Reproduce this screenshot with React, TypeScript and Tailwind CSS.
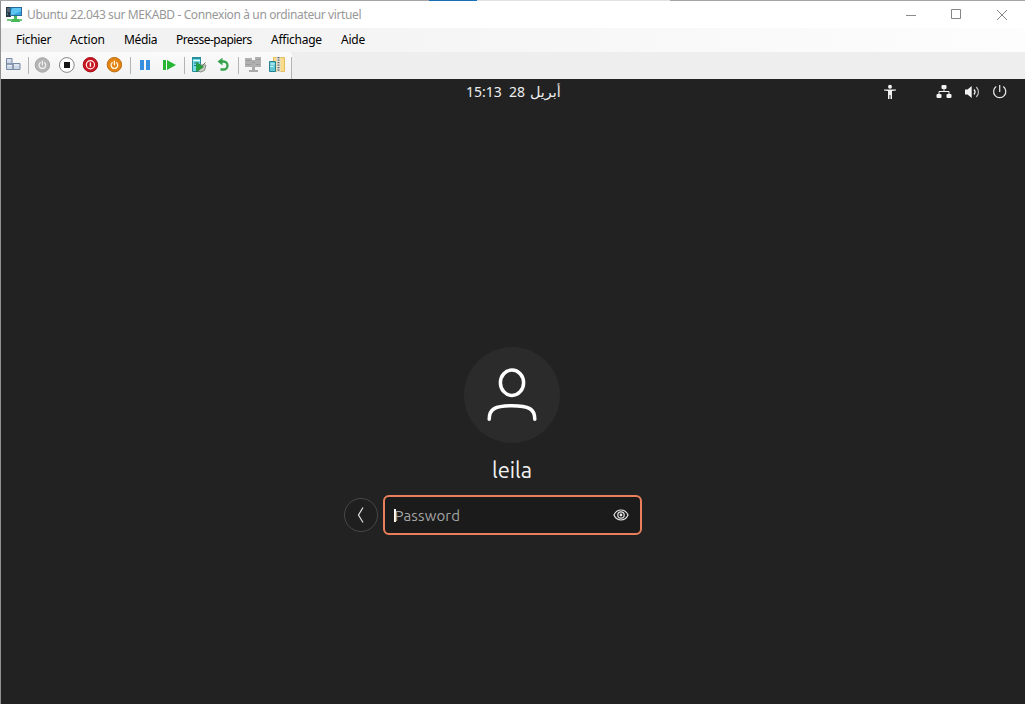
import type { ReactNode } from "react";

const menuItems = [
  { label: "Fichier", box: "w-[54px]", text: "tracking-[-0.3px]" },
  { label: "Action", box: "w-[54px]", text: "tracking-[-0.1px]" },
  { label: "Média", box: "w-[52px]", text: "tracking-[-0.35px]" },
  { label: "Presse-papiers", box: "w-[95px]", text: "tracking-[-0.51px]" },
  { label: "Affichage", box: "w-[70px]", text: "tracking-[-0.25px]" },
  { label: "Aide", box: "w-[40px]", text: "tracking-[-0.2px]" },
];

function Tool({ children }: { children: ReactNode }) {
  return (
    <button className="flex h-[26px] w-6 shrink-0 items-center justify-center">
      <svg width="18" height="18" viewBox="0 0 18 18" fill="none">
        {children}
      </svg>
    </button>
  );
}

function Separator({ className }: { className: string }) {
  return <span className={`shrink-0 border-l border-[#b4b4b4] ${className}`} />;
}

function PowerGlyph({ color }: { color: string }) {
  return (
    <path d="M7.2 6.7a3.3 3.3 0 1 0 4.4 0M9.4 5.2v3.6" stroke={color} strokeWidth="1.3" strokeLinecap="round" />
  );
}

function TitleBar() {
  return (
    <header className="flex h-[27px] items-center bg-white">
      <svg className="ml-[5px] shrink-0" width="17" height="17" viewBox="0 0 17 17">
        <path d="M0 1h5v10H0z" fill="#2b3a45" />
        <path d="M1 3h3M1 5h3" stroke="#8297a5" />
        <path d="M1 8h1" stroke="#5bd5e9" />
        <path d="M4 1h12v9H4z" fill="#286896" />
        <path d="M5 2h10v7H5z" fill="#36a6e2" />
        <path d="M7 2h8v3l-8 4H5V5z" fill="#61c5f2" />
        <path d="M8 10h3v3h3v3H5v-3h3z" fill="#48b85b" />
        <path d="M1 13h5v2H1zM13 13h3v2h-3z" fill="#71c57c" />
      </svg>
      <h1 className="ml-1 flex-1 whitespace-nowrap pb-px text-[12px] font-normal leading-[25px] tracking-[-0.385px] text-[#989898]">
        Ubuntu 22.043 sur MEKABD - Connexion à un ordinateur virtuel
      </h1>
      <button className="flex h-full w-[46px] items-center justify-center" aria-label="Réduire">
        <svg width="12" height="12" stroke="#8b8b8b"><path d="M1 6.5h10" /></svg>
      </button>
      <button className="flex h-full w-[45px] items-center justify-center" aria-label="Agrandir">
        <svg width="13" height="13" fill="none" stroke="#858585"><path d="M1.5 1.5h9v9h-9z" /></svg>
      </button>
      <button className="flex h-full w-[46px] items-center justify-center" aria-label="Fermer">
        <svg width="12" height="12" fill="none" stroke="#858585"><path d="m1 1 10 10M11 1 1 11" /></svg>
      </button>
    </header>
  );
}

function MenuBar() {
  return (
    <nav className="flex h-6 items-center bg-linear-to-r from-[#f0f0f0] to-[#fdfdfd] pl-[15px]">
      {menuItems.map((item) => (
        <span key={item.label} className={`shrink-0 whitespace-nowrap text-[12px] leading-6 text-black ${item.box} ${item.text}`}>
          {item.label}
        </span>
      ))}
    </nav>
  );
}

function Toolbar() {
  return (
    <div className="flex h-[27px] bg-[#eeeeee]">
      <div className="flex h-[27px] items-start rounded-r-sm bg-linear-to-b from-[#fbfbfb] to-[#f1f1f1]">
        <Tool>
          <path d="M2.5 2.5h5.5v5.5h-5.5zM2.5 8h6.5v5.5h-6.5zM9 7.5h7v6H9z" fill="#cbd7e5" stroke="#7889a3" />
          <path d="M3.5 4h3M3.5 9.5h4M10 9h5" stroke="#edf3f9" />
        </Tool>
        <Separator className="ml-[3px] mt-[5px] h-[17px] w-[2px]" />
        <Tool>
          <circle cx="9.4" cy="9" r="7.2" fill="#b5b5b5" stroke="#a2a2a2" />
          <PowerGlyph color="#f0f0f0" />
        </Tool>
        <Tool>
          <circle cx="9.8" cy="9" r="7.4" fill="#fff" stroke="#858585" />
          <path d="M7 6h6v6H7z" fill="#151515" />
        </Tool>
        <Tool>
          <circle cx="9.4" cy="8.7" r="7.2" fill="#c91522" stroke="#a51019" />
          <circle cx="9.4" cy="8.7" r="4.1" stroke="#fff1ed" strokeWidth="1.2" />
          <path d="M9.4 6.4v4.4" stroke="#fff" strokeWidth="1.4" />
        </Tool>
        <Tool>
          <circle cx="9.4" cy="8.7" r="7.2" fill="#e38516" stroke="#bd6d10" />
          <PowerGlyph color="#fff6dd" />
        </Tool>
        <Separator className="ml-1 mt-[5px] h-[17px] w-[3px]" />
        <Tool>
          <path d="M4 4h4v10H4zM10 4h4v10h-4z" fill="#368fdf" />
        </Tool>
        <Tool>
          <path d="M3 4h3v10H3zM7 4l9 5-9 5z" fill="#27b735" />
        </Tool>
        <Separator className="ml-[3px] mt-[5px] h-[17px] w-[3px]" />
        <Tool>
          <path d="M2.5 1.5h8v14h-8z" fill="#74dce5" stroke="#2d8c99" />
          <path d="M2 1h9v2H2z" fill="#278f9e" />
          <path d="M3 4.5h7" stroke="#e3ffff" />
          <path d="M4 7h5M4 9.5h3" stroke="#247e8b" />
          <path d="M8 9h8l-1.5 5.5-4 1.5L7 14z" fill="#c9ccc5" stroke="#8b9188" />
          <path d="m12 10 3.5-3.5" stroke="#68735f" />
          <path d="m6.5 6.5 7 4.5-7 4.5z" fill="#22a33b" stroke="#148029" strokeWidth=".5" />
        </Tool>
        <Tool>
          <path d="M6 5.5h3.5a4 4 0 0 1 0 8H6.5" stroke="#35a24b" strokeWidth="2.3" />
          <path d="m8.5 1.7-5 3.8 5 4z" fill="#35a24b" />
        </Tool>
        <Separator className="ml-[3px] mt-[5px] h-[17px] w-[3px]" />
        <Tool>
          <path d="M1 2h7v9H1zM8 4h3V1h6v10H8z" fill="#b0b0b0" />
          <path d="M2 4.5h5M8 6.5h3M12 3.5h4M12 8.5h4M2 8.5h5" stroke="#9b9b9b" />
          <path d="M8 11h3v3h3v2H5v-2h3z" fill="#aaa" />
        </Tool>
        <Tool>
          <path d="M5.5 1.5h11v14h-11z" fill="#f8dc89" stroke="#e6bd5e" />
          <path d="M8.5 1h4v15h-4z" fill="#e5e2d6" />
          <path d="M10.5 1v15" stroke="#60656a" strokeWidth="2" strokeDasharray="1.3 1.2" />
          <path d="M1.5 5.5h6v10h-6z" fill="#63c8d5" stroke="#27808f" />
          <path d="M2.5 8h4M2.5 10.5h3" stroke="#e4feff" />
        </Tool>
        <Separator className="ml-[2px] h-[22px] w-px self-end" />
      </div>
    </div>
  );
}

function GnomeBar() {
  return (
    <div className="grid h-[26px] grid-cols-[465px_96px_1fr] items-center text-[#eeeeee]">
      <span />
      <time dir="ltr" className="flex items-center whitespace-nowrap text-[14px] leading-[26px]">
        <span className="w-[43px]">15:13</span>
        <span className="w-[21px]">28</span>
        <span dir="rtl" lang="ar" className="font-['DejaVu_Sans',sans-serif] text-[14.3px]">أبريل</span>
      </time>
      <div className="flex items-center justify-end pr-[17px]">
        <svg width="14" height="16" viewBox="0 0 14 16" fill="#f2f2f2">
          <circle cx="7" cy="2.7" r="2" />
          <path d="M1 5.5h12v1L9 7v8H7.5v-4h-1v4H5V7L1 6.5z" />
        </svg>
        <svg className="ml-[39px]" width="16" height="16" viewBox="0 0 16 16" fill="#f2f2f2">
          <rect x="5.5" y="1" width="5" height="4" rx="1" />
          <rect x=".5" y="10" width="5" height="4" rx="1" />
          <rect x="10.5" y="10" width="5" height="4" rx="1" />
          <path d="M8 4v4M3 10.5V7.5h10v3" fill="none" stroke="#f2f2f2" />
        </svg>
        <svg className="ml-[12px]" width="17" height="16" viewBox="0 0 17 16" fill="none" stroke="#f2f2f2">
          <path d="M1 5.5h2.5L7.7 2v12l-4.2-3.5H1z" fill="#f2f2f2" stroke="none" />
          <path d="M10 5.5q2.2 2.5 0 5" strokeWidth="1.2" />
          <path d="M12.3 3q4.4 5 0 10" stroke="#b8b8b8" strokeWidth="1.2" />
        </svg>
        <svg className="ml-[11px]" width="16" height="16" viewBox="0 0 16 16" fill="none" stroke="#e5e5e5" strokeWidth="1.25">
          <path d="M4.2 2.6a6.1 6.1 0 1 0 7 0M7.7 1v7" />
        </svg>
      </div>
    </div>
  );
}

function Login() {
  return (
    <main className="flex flex-1 flex-col pt-[242px] text-[#f2f2f2]">
      <div className="ml-[463px] flex size-24 items-center justify-center rounded-full bg-[#2b2b2b]">
        <svg width="56" height="60" viewBox="0 0 56 60" fill="none" stroke="#fff" strokeWidth="3.5" strokeLinecap="round">
          <ellipse cx="28" cy="17.7" rx="11.6" ry="12.7" />
          <path d="M5.2 54.2C5.2 44 11 40.7 28 40.7S50.8 44 50.8 54.2" />
        </svg>
      </div>
      <p className="ml-[463px] mt-[13px] w-24 text-center font-['Ubuntu','Open_Sans',sans-serif] text-[22px] leading-[28px] tracking-[-0.1px]">leila</p>
      <div className="ml-[343px] mt-[11px] flex items-center">
        <button className="flex size-[34px] items-center justify-center rounded-full border border-[#484848] bg-[#1f1f1f]" aria-label="Retour">
          <svg width="10" height="18" viewBox="0 0 10 18" fill="none" stroke="#e3e3e3" strokeWidth="1.2">
            <path d="M7 1.5 2.5 9 7 16.5" />
          </svg>
        </button>
        <div className="ml-[5px] flex h-10 w-[259px] items-center rounded-[6px] border-2 border-[#e9805b] bg-[#1b1b1b] px-[9px]">
          <span className="h-[13px] w-[1.5px] bg-white" />
          <span className="-ml-px flex-1 pt-px font-['Ubuntu','Noto_Sans',sans-serif] text-[15px] leading-5 tracking-[0.15px] text-[#a6a6a6]">Password</span>
          <svg className="mr-[2px]" width="16" height="14" viewBox="0 0 17 14" fill="none" stroke="#e6e6e6" strokeWidth="1.25">
            <path d="M1 7q2.5-5.3 7.5-5.3T16 7q-2.5 5.3-7.5 5.3T1 7Z" />
            <circle cx="8.5" cy="7" r="3.4" />
            <circle cx="8.5" cy="7" r="1.5" fill="#e6e6e6" stroke="none" />
          </svg>
        </div>
      </div>
    </main>
  );
}

export default function App() {
  return (
    <div className="flex h-[704px] w-[1025px] flex-col overflow-hidden bg-[#222222] font-['Noto_Sans',sans-serif]">
      <div className="flex h-px shrink-0 bg-[#a5a5a5]">
        <span className="w-[429px]" />
        <span className="w-12 bg-[#176fb7]" />
        <span className="w-[193px] bg-[#e2e2e2]" />
      </div>
      <div className="flex min-h-0 flex-1 flex-col border-l border-[#929292]">
        <TitleBar />
        <MenuBar />
        <Toolbar />
        <GnomeBar />
        <Login />
      </div>
    </div>
  );
}
